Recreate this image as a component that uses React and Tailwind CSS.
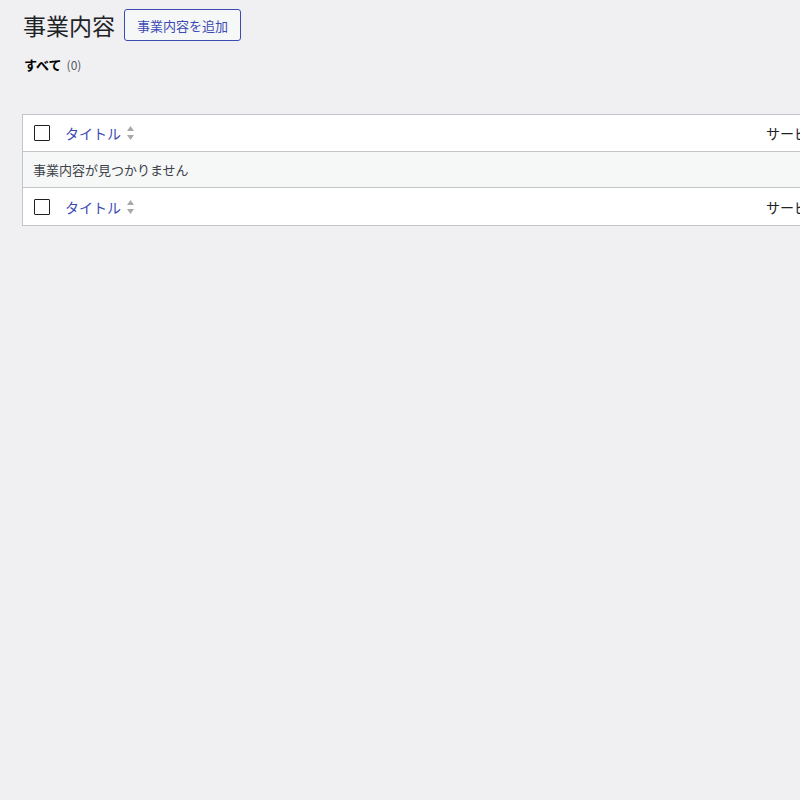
import React from "react";

const font = { fontFamily: '"Noto Sans CJK JP", "Noto Sans", sans-serif' };

function SortIcon() {
  return (
    <svg width="9" height="16" viewBox="0 0 9 16" className="ml-[5px]">
      <path d="M4.5 1 L8 6 L1 6 Z" fill="#a7aaad" />
      <path d="M4.5 15 L8 10 L1 10 Z" fill="#a7aaad" />
    </svg>
  );
}

function HeadRow({ border }) {
  return (
    <div className={`flex items-center h-[37px] bg-white ${border}`}>
      <div className="pl-[11px] shrink-0">
        <div className="w-[16px] h-[16px] border border-[#1e1e1e] rounded-[1px] bg-white" />
      </div>
      <div className="flex items-center ml-[15px] w-[701px] shrink-0">
        <span className="text-[14px] text-[#3c4bb4] leading-none">タイトル</span>
        <SortIcon />
      </div>
      <span className="text-[14px] text-[#1d2327] leading-none">サービス内容</span>
    </div>
  );
}

export default function App() {
  return (
    <div className="w-[800px] h-[800px] overflow-hidden bg-[#f0f0f2]" style={font}>
      <div className="pl-[22px] pt-[9px]">
        <div className="flex items-center">
          <h1 className="text-[23px] text-[#1d2327] leading-[32px] font-normal ml-[1px]">事業内容</h1>
          <button className="ml-[9px] h-[32px] px-[12px] border border-[#3c4bb4] rounded-[3px] text-[13px] text-[#3c4bb4] bg-[#f6f7f7] leading-none">
            事業内容を追加
          </button>
        </div>
        <div className="mt-[15px] ml-[2px] flex items-baseline text-[13px] leading-[18px]">
          <span className="font-bold text-black">すべて</span>
          <span className="ml-[5px] text-[12px] text-[#50575e]">(0)</span>
        </div>
        <div className="mt-[40px] w-[1100px] border border-[#c3c4c7] bg-white">
          <HeadRow border="border-b border-[#c3c4c7]" />
          <div className="h-[36px] flex items-center bg-[#f6f7f7] pl-[10px] border-b border-[#c3c4c7]">
            <span className="text-[13px] text-[#3c434a]">事業内容が見つかりません</span>
          </div>
          <HeadRow border="" />
        </div>
      </div>
    </div>
  );
}
